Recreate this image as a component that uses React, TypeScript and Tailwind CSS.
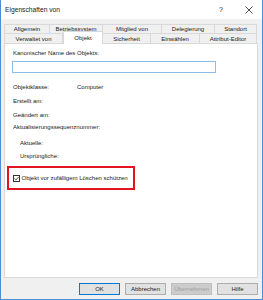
import React from "react";

const row1 = [
  { label: "Allgemein", w: "w-[46px]" },
  { label: "Betriebssystem", w: "w-[53px]" },
  { label: "Mitglied von", w: "w-[59px]" },
  { label: "Delegierung", w: "w-[53px]" },
  { label: "Standort", w: "w-[42px]" },
];

const row2 = [
  { label: "Verwaltet von", w: "w-[59px]" },
  { label: "Objekt", w: "w-[40px]", active: true },
  { label: "Sicherheit", w: "w-[48px]" },
  { label: "Einwählen", w: "w-[49px]" },
  { label: "Attribut-Editor", w: "w-[57px]" },
];

function Tab({ label, w, first, active }: { label: string; w: string; first?: boolean; active?: boolean }) {
  if (active) {
    return (
      <div
        className={`${w} relative z-10 -mt-[2px] h-[13px] shrink-0 bg-white border-l border-r border-t border-[#d9d9d9] flex justify-center pt-[2px] leading-[8px]`}
      >
        {label}
      </div>
    );
  }
  return (
    <div
      className={`${w} h-full shrink-0 bg-[#f0f0f0] border-t border-r border-[#d9d9d9] ${first ? "border-l" : ""} flex items-center justify-center leading-[8px]`}
    >
      {label}
    </div>
  );
}

function Btn({ label, primary, disabled }: { label: string; primary?: boolean; disabled?: boolean }) {
  return (
    <div
      className={`w-[41px] h-[12px] flex items-center justify-center leading-[8px] border ${
        primary
          ? "border-[#0078d7] bg-[#e1e1e1] text-[#1a1a1a]"
          : disabled
          ? "border-[#bfbfbf] bg-[#cccccc] text-[#a0a0a0]"
          : "border-[#adadad] bg-[#e1e1e1] text-[#1a1a1a]"
      }`}
    >
      {label}
    </div>
  );
}

export default function App() {
  return (
    <div
      className="w-[263px] h-[300px] flex flex-col bg-white border-l border-r border-b border-[#4b8ed6] text-[#1a1a1a] text-[6px]"
      style={{ fontFamily: '"Liberation Sans", Arial, sans-serif' }}
    >
      {/* title bar */}
      <div className="h-[19px] shrink-0 flex items-center bg-white">
        <span className="pl-[4px] text-[6.7px] leading-[8px]">Eigenschaften von</span>
        <span className="ml-auto mr-[22px] text-[7px] leading-[8px]">?</span>
        <svg width="8" height="8" viewBox="0 0 8 8" className="mr-[9px]">
          <path d="M0.5 0.5 L7.5 7.5 M7.5 0.5 L0.5 7.5" stroke="#222" strokeWidth="0.8" fill="none" />
        </svg>
      </div>

      {/* body */}
      <div className="flex-1 bg-[#f0f0f0] flex flex-col pl-[3px] pt-[5px]">
        <div className="flex h-[9px]">
          {row1.map((t, i) => (
            <Tab key={t.label} label={t.label} w={t.w} first={i === 0} />
          ))}
        </div>
        <div className="flex h-[10px]">
          {row2.map((t, i) => (
            <Tab key={t.label} label={t.label} w={t.w} first={i === 0} active={t.active} />
          ))}
        </div>

        {/* panel */}
        <div className="w-[254px] h-[235px] bg-white border border-[#d9d9d9] flex flex-col pt-[5px] leading-[8px]">
          <div className="pl-[8px]">Kanonischer Name des Objekts:</div>
          <div className="ml-[7px] mt-[4px] w-[204px] h-[12px] border border-[#8fbbe8] bg-white" />
          <div className="pl-[8px] mt-[10px] flex">
            <span className="w-[64px]">Objektklasse:</span>
            <span>Computer</span>
          </div>
          <div className="pl-[8px] mt-[6px]">Erstellt am:</div>
          <div className="pl-[8px] mt-[6px]">Geändert am:</div>
          <div className="pl-[8px] mt-[4px]">Aktualisierungssequenznummer:</div>
          <div className="pl-[15px] mt-[8px]">Aktuelle:</div>
          <div className="pl-[15px] mt-[5px]">Ursprüngliche:</div>
          <div className="ml-[2px] mt-[6px] w-[128px] h-[24px] border-2 border-[#e3141f] flex items-center pl-[4px]">
            <div className="w-[7px] h-[7px] border border-[#333333] bg-white flex items-center justify-center">
              <svg width="5" height="5" viewBox="0 0 5 5">
                <path d="M0.4 2.6 L1.9 4 L4.6 0.9" stroke="#222" strokeWidth="0.8" fill="none" />
              </svg>
            </div>
            <span className="ml-[1.5px]">Objekt vor zufälligem Löschen schützen</span>
          </div>
        </div>

        {/* buttons */}
        <div className="flex gap-[5px] pl-[75px] mt-[5px]">
          <Btn label="OK" primary />
          <Btn label="Abbrechen" />
          <Btn label="Übernehmen" disabled />
          <Btn label="Hilfe" />
        </div>
      </div>
    </div>
  );
}
